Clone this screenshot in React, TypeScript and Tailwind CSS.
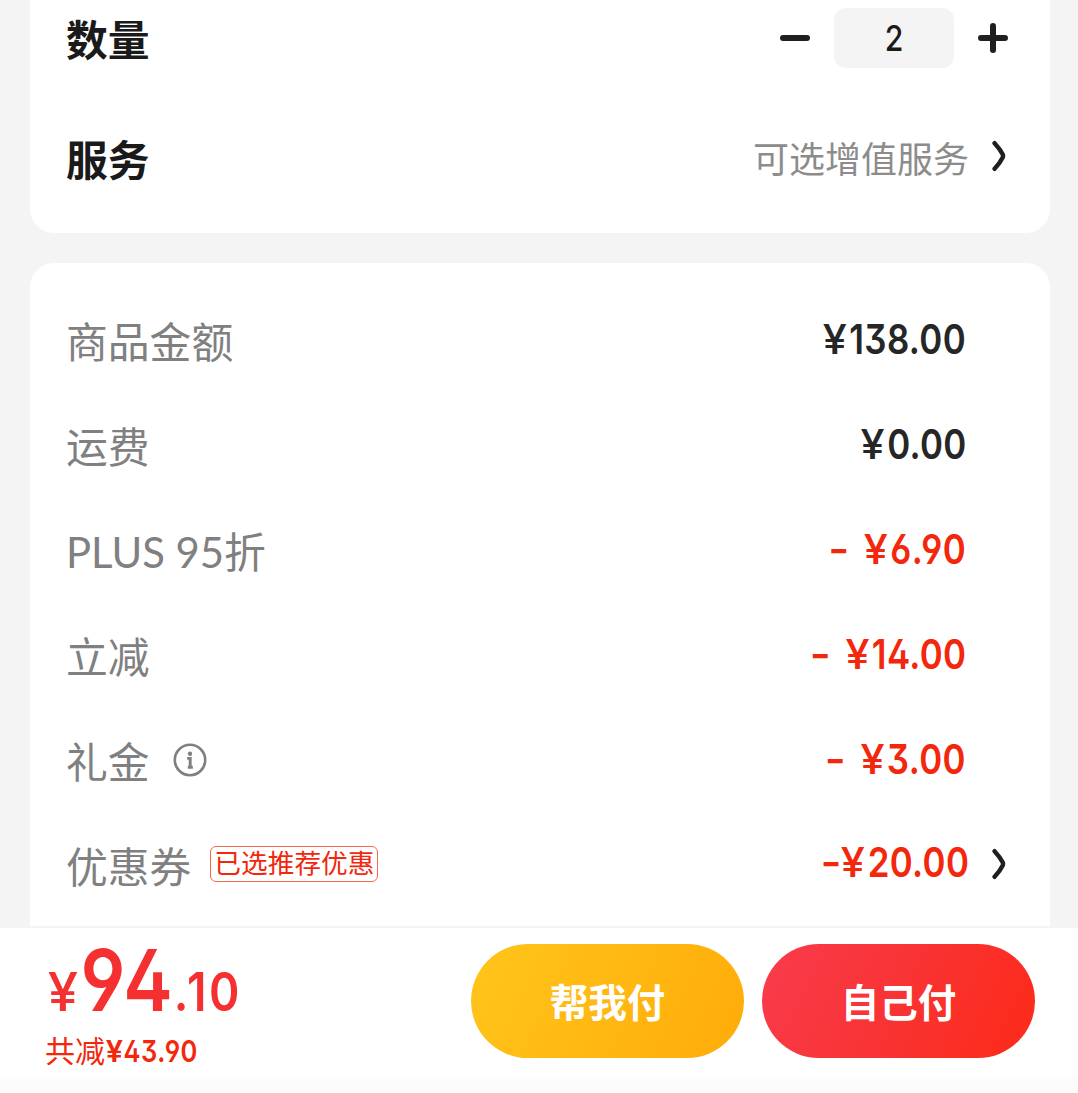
import type { ReactNode } from "react"

const priceFeatures = "[font-feature-settings:'cv02','cv03','cv04','cv09']"

function Chevron() {
    return (
        <svg width="16" height="32" viewBox="0 0 16 32" fill="none" stroke="#1f1f1f" strokeWidth="4.4" strokeLinecap="round" strokeLinejoin="round">
            <path d="M2.6 3.2 Q8 9 10.8 14.6 Q11.3 16 10.8 17.2 Q8 23 2.6 28.8" />
        </svg>
    )
}

function InfoIcon() {
    return (
        <svg width="34" height="34" viewBox="0 0 34 34" fill="none" stroke="#808080" strokeWidth="2.6">
            <circle cx="17" cy="17" r="15.2" />
            <circle cx="17" cy="10.8" r="2.2" fill="#808080" stroke="none" />
            <path d="M14.2 15.4 H17.2 V24.6 M14.8 24.2 H19.8" strokeWidth="2.9" />
        </svg>
    )
}

function Price({ amount, minus = "", className = "text-[#262626]" }: { amount: string; minus?: string; className?: string }) {
    return (
        <span className={`flex origin-right scale-x-[0.84] pb-[2px] text-[41.5px] leading-[48px] font-semibold whitespace-pre ${priceFeatures} ${className}`}>
            {minus && <span className={`origin-right scale-x-[1.3] ${minus.length > 1 ? "mr-[9px]" : "mr-[5px]"}`}>{minus}</span>}
            <span className="mr-[3px] origin-right scale-x-[1.24] font-medium">¥</span>
            <span className="-mr-[0.4px] tracking-[0.4px]">{amount}</span>
        </span>
    )
}

function Row({ label, extra, children }: { label: string; extra?: ReactNode; children: ReactNode }) {
    return (
        <div className="flex h-[105px] items-center justify-between">
            <div className="flex items-center">
                <span className="pt-[5px] font-[Lato,'Noto_Sans_CJK_SC',sans-serif] text-[41.8px] leading-[60px] text-[#808080]">{label}</span>
                {extra}
            </div>
            {children}
        </div>
    )
}

const discounts = [
    { label: "PLUS 95折", amount: "6.90" },
    { label: "立减", amount: "14.00" },
    { label: "礼金", amount: "3.00", info: true },
]

export default function App() {
    return (
        <div className="flex h-[1093px] w-[1078px] flex-col overflow-hidden bg-[#f4f4f4] font-[Inter,'Noto_Sans_CJK_SC',sans-serif]">
            <main className="flex h-[926px] shrink-0 flex-col gap-[30px] overflow-hidden pr-[28px] pl-[30px]">
                <section className="flex h-[233px] shrink-0 flex-col gap-[22px] rounded-b-[24px] bg-white pr-[42px] pl-9">
                    <div className="flex h-[76px] items-center justify-between">
                        <span className="pt-[5px] text-[41.8px] leading-[60px] font-bold text-[#1a1a1a]">数量</span>
                        <div className="flex items-center gap-6">
                            <svg width="30" height="30" viewBox="0 0 30 30" stroke="#1f1f1f" strokeWidth="6" strokeLinecap="round">
                                <path d="M3 15 H27" />
                            </svg>
                            <div className="flex h-[60px] w-[120px] items-center justify-center rounded-xl bg-[#f4f4f4]">
                                <span className="scale-x-[0.84] text-[36px] font-medium text-[#1a1a1a]">2</span>
                            </div>
                            <svg width="30" height="30" viewBox="0 0 30 30" stroke="#1f1f1f" strokeWidth="6" strokeLinecap="round">
                                <path d="M3 15 H27 M15 3 V27" />
                            </svg>
                        </div>
                    </div>
                    <div className="flex h-[120px] items-center justify-between">
                        <span className="pt-[5px] text-[41.8px] leading-[60px] font-bold text-[#1a1a1a]">服务</span>
                        <div className="flex items-center gap-[23px]">
                            <span className="pt-1 text-[36px] leading-[52px] text-[#8c8c8c]">可选增值服务</span>
                            <div className="pb-1">
                                <Chevron />
                            </div>
                        </div>
                    </div>
                </section>

                <section className="flex h-[700px] shrink-0 flex-col rounded-t-[24px] bg-white pt-6 pr-[84px] pl-9">
                    <Row label="商品金额">
                        <Price amount="138.00" />
                    </Row>
                    <Row label="运费">
                        <Price amount="0.00" />
                    </Row>
                    {discounts.map((item) => (
                        <Row
                            key={item.label}
                            label={item.label}
                            extra={
                                item.info && (
                                    <div className="ml-[23.5px]">
                                        <InfoIcon />
                                    </div>
                                )
                            }
                        >
                            <Price minus="- " amount={item.amount} className="text-[#f2270c]" />
                        </Row>
                    ))}
                    <Row
                        label="优惠券"
                        extra={
                            <span className="mb-[2px] ml-[19px] flex h-9 w-[168px] items-center justify-center rounded-md border border-[#f2270c]/70 text-[26.7px] leading-none whitespace-nowrap text-[#f2270c]">
                                已选推荐优惠
                            </span>
                        }
                    >
                        <div className="-mr-[42px] flex items-center gap-[23px] pb-[2px]">
                            <div className="pb-[2px]">
                                <Price minus="-" amount="20.00" className="text-[#f2270c]" />
                            </div>
                            <Chevron />
                        </div>
                    </Row>
                </section>
            </main>

            <footer className="flex h-[151px] shrink-0 items-start justify-between border-t-2 border-[#f4f4f4] bg-white pr-[43px] pl-[46px]">
                <div className="flex flex-col text-[#f53030]">
                    <div className={`flex h-[98px] w-[200px] origin-left scale-x-[0.87] items-baseline leading-[104px] font-semibold ${priceFeatures}`}>
                        <span className="mr-[8px] ml-[2px] origin-left scale-x-[1.18] text-[53px] font-medium">¥</span>
                        <span className="text-[85.5px] tracking-[1px]">94</span>
                        <span className="text-[53px] tracking-[3px]">.10</span>
                    </div>
                    <div className="-ml-px flex h-[50px] items-center text-[#f2270c]">
                        <span className="text-[30px] leading-[50px]">共减</span>
                        <span className={`flex origin-left scale-x-[0.85] text-[30px] leading-[50px] font-semibold ${priceFeatures}`}>
                            <span className="mr-1 ml-px origin-left scale-x-[1.2]">¥</span>
                            <span className="tracking-[0.6px]">43.90</span>
                        </span>
                    </div>
                </div>
                <div className="flex gap-[18px] pt-4 text-[38.5px] font-bold text-white">
                    <button className="h-[114px] w-[273px] rounded-full bg-[linear-gradient(115deg,#ffc51b,#ffab08)] pt-[5px]">帮我付</button>
                    <button className="h-[114px] w-[273px] rounded-full bg-[linear-gradient(115deg,#f93b4c,#f83436_45%,#fd2a18)] pt-[5px]">自己付</button>
                </div>
            </footer>
            <div className="flex-1 bg-[#fcfcfc]" />
        </div>
    )
}
